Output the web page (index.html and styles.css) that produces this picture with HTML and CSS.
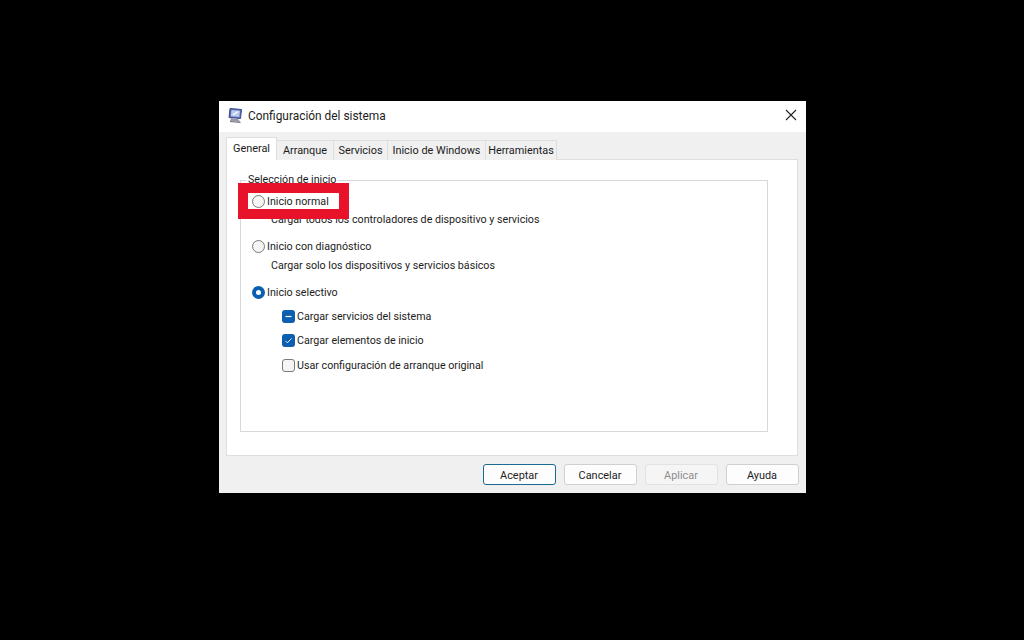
FILE: index.html
```html
<!DOCTYPE html>
<html lang="es">
<head>
  <meta charset="UTF-8" />
  <title>Configuración del sistema</title>
  <link rel="stylesheet" href="styles.css">
</head>
<body>
<div class="window">
  <div class="titlebar">
    <svg class="app-icon" width="16" height="18" viewBox="0 0 16 18">
      <path d="M3 1.5 L14.5 2.5 L13.5 11.5 L2 10.5 Z" fill="#5a6fb8" stroke="#3d4a86" stroke-width="1"/>
      <path d="M4.5 3 L13 3.8 L12.3 10 L3.8 9.2 Z" fill="#b9c9ee"/>
      <path d="M6 8 L11 4.5" stroke="#fff" stroke-width="1.2"/>
      <path d="M4 11 L11 12 L13.5 15 L3 14 Z" fill="#9a9aa6"/>
      <path d="M3 14 L13.5 15 L13.5 16 L3 15 Z" fill="#6c6c78"/>
    </svg>
    <span class="title">Configuración del sistema</span>
    <svg class="close" width="12" height="12" viewBox="0 0 12 12">
      <path d="M1 1 L11 11 M11 1 L1 11" stroke="#222" stroke-width="1.1" fill="none"/>
    </svg>
  </div>

  <div class="content">
    <div class="tabs">
      <div class="tab active">General</div>
      <div class="tab tab-arranque">Arranque</div>
      <div class="tab tab-servicios">Servicios</div>
      <div class="tab tab-inicio">Inicio de Windows</div>
      <div class="tab tab-herramientas">Herramientas</div>
    </div>

    <div class="panel">
      <div class="group">
        <div class="group-label">Selección de inicio</div>

        <div class="option first">
          <span class="radio"></span>
          <span>Inicio normal</span>
        </div>
        <div class="hint hint-first">Cargar todos los controladores de dispositivo y servicios</div>

        <div class="option">
          <span class="radio"></span>
          <span>Inicio con diagnóstico</span>
        </div>
        <div class="hint">Cargar solo los dispositivos y servicios básicos</div>

        <div class="option">
          <span class="radio checked"></span>
          <span>Inicio selectivo</span>
        </div>

        <div class="checks">
          <div class="check-row">
            <span class="check filled">
              <svg width="13" height="13" viewBox="0 0 13 13"><path d="M3.5 6.5 H9.5" stroke="#fff" stroke-width="1.2"/></svg>
            </span>
            <span>Cargar servicios del sistema</span>
          </div>
          <div class="check-row">
            <span class="check filled">
              <svg width="13" height="13" viewBox="0 0 13 13"><path d="M3.4 6.8 L5.4 8.8 L9.6 4.4" stroke="#fff" stroke-width="0.9" fill="none"/></svg>
            </span>
            <span>Cargar elementos de inicio</span>
          </div>
          <div class="check-row last">
            <span class="check"></span>
            <span>Usar configuración de arranque original</span>
          </div>
        </div>
      </div>
    </div>

    <div class="buttons">
      <button class="btn default">Aceptar</button>
      <button class="btn">Cancelar</button>
      <button class="btn disabled">Aplicar</button>
      <button class="btn">Ayuda</button>
    </div>
  </div>

  <!-- Red highlight drawn over the first option -->
  <div class="highlight"></div>
  <div class="highlight-label">
    <span class="radio"></span>
    <span>Inicio normal</span>
  </div>
</div>
</body>
</html>
```

FILE: styles.css
```css
/* Reset */
html, body {
  margin: 0;
  padding: 0;
}

body {
  width: 1024px;
  height: 640px;
  background-color: #000;
  padding: 101px 0 0 219px;
  box-sizing: border-box;
  overflow: hidden;
  font-family: Roboto, "Noto Sans", sans-serif;
  font-size: 10.7px;
  color: #1c1c1c;
}

.window {
  width: 587px;
  height: 392px;
  background-color: #f0f0f0;
  position: relative;
  display: flex;
  flex-direction: column;
}

/* Title bar */
.titlebar {
  height: 31px;
  background-color: #fff;
  display: flex;
  align-items: center;
  padding: 0 9px 0 8px;
  flex-shrink: 0;
}
.app-icon {
  margin-right: 5px;
  margin-top: -2px;
}
.title {
  font-size: 11.9px;
  flex: 1;
  margin-top: -2px;
}
.close {
  margin-top: -3px;
}

/* Tabs */
.content {
  flex: 1;
  display: flex;
  flex-direction: column;
  padding: 5px 8px 0 7px;
}
.tabs {
  display: flex;
  height: 23px;
  margin-bottom: -1px;
  align-items: flex-end;
  position: relative;
  z-index: 1;
}
.tab {
  height: 19px;
  line-height: 20px;
  background-color: #f0f0f0;
  border: 1px solid #dedede;
  border-bottom: none;
  border-left: none;
  text-align: center;
  font-size: 10.9px;
}
.tab.active {
  width: 49px;
  height: 22px;
  line-height: 22px;
  background-color: #fff;
  border-left: 1px solid #dedede;
}
.tab-arranque { width: 56px; }
.tab-servicios { width: 53px; }
.tab-inicio { width: 97px; }
.tab-herramientas { width: 70px; }

.panel {
  height: 297px;
  background-color: #fff;
  border: 1px solid #dedede;
  padding: 20px 29px 0 13px;
  box-sizing: border-box;
}

.group {
  height: 252px;
  border: 1px solid #d8d8d8;
  position: relative;
  padding-left: 11px;
  box-sizing: border-box;
}
.group-label {
  position: absolute;
  top: -8px;
  left: 5px;
  padding: 0 2px;
  background-color: #fff;
  line-height: 14px;
}

.option {
  display: flex;
  align-items: center;
  gap: 2px;
  height: 16px;
  margin-top: 11px;
}
.option.first { margin-top: 12px; }

.hint {
  margin: 3px 0 0 19px;
  height: 16px;
  line-height: 18px;
  white-space: nowrap;
}
.hint-first { margin-top: 2px; }

.radio {
  width: 11px;
  height: 11px;
  border: 1px solid #7a7a7a;
  border-radius: 50%;
  background-color: #f5f5f5;
  display: inline-block;
  flex-shrink: 0;
}
.radio.checked {
  width: 5px;
  height: 5px;
  border: 4px solid #0a5fb0;
  background-color: #fff;
}

.checks {
  margin: 8px 0 0 30px;
  display: flex;
  flex-direction: column;
  gap: 8px;
}
.check-row {
  display: flex;
  align-items: center;
  gap: 2px;
  height: 16px;
}
.check-row.last { margin-top: 1px; }
.check {
  width: 11px;
  height: 11px;
  border: 1px solid #7a7a7a;
  border-radius: 3px;
  background-color: #f5f5f5;
  flex-shrink: 0;
  display: inline-block;
}
.check.filled {
  width: 13px;
  height: 13px;
  border: none;
  background-color: #0a5fb0;
}
.check svg {
  display: block;
}

/* Bottom buttons */
.buttons {
  display: flex;
  justify-content: flex-end;
  gap: 8px;
  margin-top: 8px;
  margin-right: -1px;
}
.btn {
  width: 73px;
  height: 21px;
  padding: 1px 1px 0 0;
  background-color: #fdfdfd;
  border: 1px solid #d0d0d0;
  border-radius: 3px;
  font-family: inherit;
  font-size: 10.9px;
  color: #1c1c1c;
}
.btn.default {
  border-color: #1b6a94;
}
.btn.disabled {
  background-color: #f5f5f5;
  border-color: #e2e2e2;
  color: #8d8d8d;
}

/* Red highlight */
.highlight {
  position: absolute;
  left: 19px;
  top: 82px;
  width: 91px;
  height: 16px;
  border: 10px solid #e8132a;
}
.highlight-label {
  position: absolute;
  left: 29px;
  top: 92px;
  width: 91px;
  height: 16px;
  display: flex;
  align-items: center;
  gap: 2px;
  padding-left: 4px;
  box-sizing: border-box;
  background-color: #fff;
}
```
